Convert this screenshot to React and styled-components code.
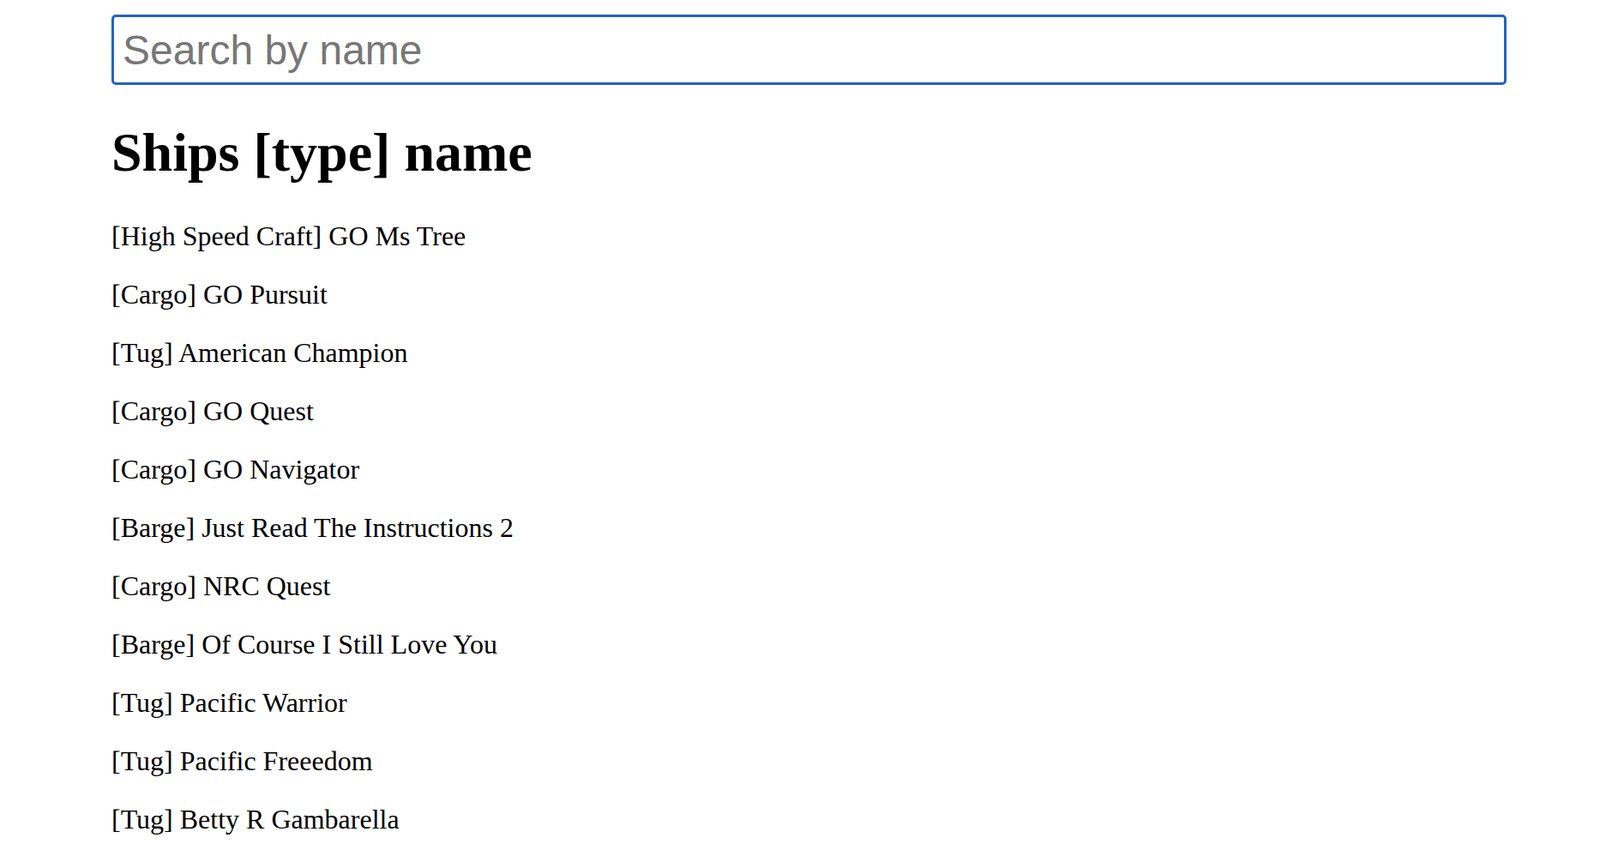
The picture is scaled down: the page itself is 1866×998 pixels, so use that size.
import React, { useState } from 'react'
import styled, { createGlobalStyle } from 'styled-components'

const Global = createGlobalStyle`
body {
  margin: 0;
  background: #fff;
  font-family: "Liberation Serif", "Times New Roman", serif;
  color: #000;
}
`

const Page = styled.div`
  width: 1627px;
  margin-left: 130px;
  padding-top: 17px;
`

const Search = styled.input`
  display: block;
  box-sizing: border-box;
  width: 100%;
  height: 82px;
  padding: 0 10px;
  border: 3px solid #2362c4;
  border-radius: 5px;
  outline: none;
  font-family: "Liberation Sans", Arial, sans-serif;
  font-size: 48px;
  color: #000;

  &::placeholder {
    color: #777;
  }
`

const Title = styled.h1`
  margin: 47px 0 0;
  font-size: 64px;
  line-height: 1;
  font-weight: bold;
`

const List = styled.div`
  display: flex;
  flex-direction: column;
  gap: 32px;
  margin-top: 47px;
`

const Row = styled.p`
  margin: 0;
  font-size: 32px;
  line-height: 36px;
`

const ships = [
  { type: 'High Speed Craft', name: 'GO Ms Tree' },
  { type: 'Cargo', name: 'GO Pursuit' },
  { type: 'Tug', name: 'American Champion' },
  { type: 'Cargo', name: 'GO Quest' },
  { type: 'Cargo', name: 'GO Navigator' },
  { type: 'Barge', name: 'Just Read The Instructions 2' },
  { type: 'Cargo', name: 'NRC Quest' },
  { type: 'Barge', name: 'Of Course I Still Love You' },
  { type: 'Tug', name: 'Pacific Warrior' },
  { type: 'Tug', name: 'Pacific Freeedom' },
  { type: 'Tug', name: 'Betty R Gambarella' },
]

export default function App() {
  let [query, setQuery] = useState('')

  const shown = ships.filter((s) =>
    s.name.toLowerCase().includes(query.trim().toLowerCase())
  )

  return (
    <>
      <Global />
      <Page>
        <Search
          type="text"
          placeholder="Search by name"
          value={query}
          onChange={(e) => setQuery(e.target.value)}
        />
        <Title>Ships [type] name</Title>
        <List>
          {shown.map((s, i) => (
            <Row key={i}>
              [{s.type}] {s.name}
            </Row>
          ))}
        </List>
      </Page>
    </>
  )
}
